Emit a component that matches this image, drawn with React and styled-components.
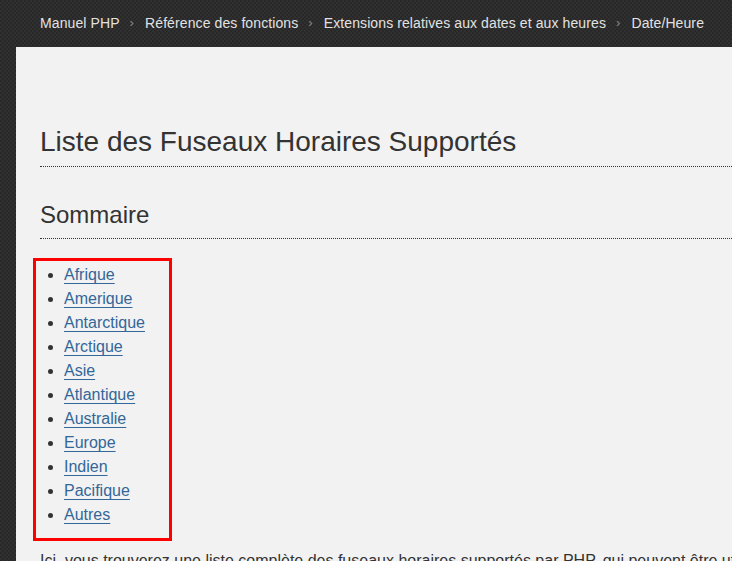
import React from "react";
import styled, { createGlobalStyle } from "styled-components";

const GlobalStyle = createGlobalStyle`
  html, body {
    margin: 0;
    padding: 0;
    overflow: hidden;
  }
  body {
    background-color: #2b2b2b;
    background-image: repeating-conic-gradient(#303030 0% 25%, #282828 0% 50%);
    background-size: 4px 4px;
    font-family: "Liberation Sans", Arial, sans-serif;
  }
`;

const Header = styled.nav`
  height: 47px;
  display: flex;
  align-items: center;
  padding-left: 40px;
  padding-bottom: 2px;
  box-sizing: border-box;
  font-size: 14px;
  letter-spacing: 0.1px;
  color: #e2e2e2;
  white-space: nowrap;
`;

const Crumb = styled.span`
  color: #e2e2e2;
`;

const Sep = styled.span`
  color: #8a8a8a;
  margin: 0 11px 0 10px;
  font-size: 13px;
`;

const Panel = styled.main`
  margin-left: 16px;
  background: #f2f2f2;
  padding: 78px 0 40px 24px;
  min-height: 600px;
  overflow: hidden;
  color: #333;
`;

const Title = styled.h1`
  margin: 0;
  font-size: 28px;
  font-weight: normal;
  line-height: 34px;
  padding-bottom: 7px;
  border-bottom: 1px dotted #333;
  white-space: nowrap;
`;

const Subtitle = styled.h2`
  margin: 33px 0 0;
  font-size: 24px;
  font-weight: normal;
  line-height: 29px;
  padding-bottom: 9px;
  border-bottom: 1px dotted #333;
`;

const Highlight = styled.div`
  margin-top: 19px;
  margin-left: -7px;
  width: 139px;
  box-sizing: border-box;
  border: 3px solid #ff0000;
  padding: 2px 0 11px;
`;

const List = styled.ul`
  margin: 0;
  padding-left: 28px;
  list-style: disc;
  font-size: 16px;
  line-height: 24px;
`;

const Item = styled.li`
  color: #333;
`;

const Link = styled.a`
  color: #336699;
  text-decoration: underline;
  text-decoration-thickness: 1px;
  text-underline-offset: 3px;
`;

const Text = styled.p`
  margin: 8px 0 0;
  font-size: 16px;
  line-height: 24px;
  white-space: nowrap;
`;

const crumbs = [
  "Manuel PHP",
  "Référence des fonctions",
  "Extensions relatives aux dates et aux heures",
  "Date/Heure",
];

const regions = [
  "Afrique",
  "Amerique",
  "Antarctique",
  "Arctique",
  "Asie",
  "Atlantique",
  "Australie",
  "Europe",
  "Indien",
  "Pacifique",
  "Autres",
];

export default function App() {
  return (
    <>
      <GlobalStyle />
      <Header>
        {crumbs.map((c, i) => (
          <React.Fragment key={c}>
            {i > 0 && <Sep>›</Sep>}
            <Crumb>{c}</Crumb>
          </React.Fragment>
        ))}
      </Header>
      <Panel>
        <Title>Liste des Fuseaux Horaires Supportés</Title>
        <Subtitle>Sommaire</Subtitle>
        <Highlight>
          <List>
            {regions.map((r) => (
              <Item key={r}>
                <Link href="#">{r}</Link>
              </Item>
            ))}
          </List>
        </Highlight>
        <Text>
          Ici, vous trouverez une liste complète des fuseaux horaires supportés
          par PHP, qui peuvent être utilisés avec les fonctions de date.
        </Text>
      </Panel>
    </>
  );
}
